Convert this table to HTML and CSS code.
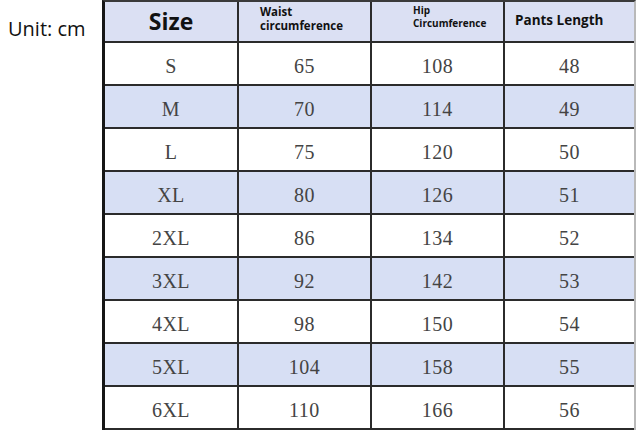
FILE: index.html
```html
<!DOCTYPE html>
<html>
<head>
<meta charset="utf-8">
<link rel="stylesheet" href="styles.css">
</head>
<body>
<div class="page">
  <div class="unit">Unit: cm</div>
  <div class="chart">
    <div class="cell head size-head">Size</div>
    <div class="cell head waist-head">Waist<br>circumference</div>
    <div class="cell head hip-head">Hip<br>Circumference</div>
    <div class="cell head pants-head">Pants Length</div>

    <div class="cell">S</div><div class="cell">65</div><div class="cell">108</div><div class="cell">48</div>
    <div class="cell alt">M</div><div class="cell alt">70</div><div class="cell alt">114</div><div class="cell alt">49</div>
    <div class="cell">L</div><div class="cell">75</div><div class="cell">120</div><div class="cell">50</div>
    <div class="cell alt">XL</div><div class="cell alt">80</div><div class="cell alt">126</div><div class="cell alt">51</div>
    <div class="cell">2XL</div><div class="cell">86</div><div class="cell">134</div><div class="cell">52</div>
    <div class="cell alt">3XL</div><div class="cell alt">92</div><div class="cell alt">142</div><div class="cell alt">53</div>
    <div class="cell">4XL</div><div class="cell">98</div><div class="cell">150</div><div class="cell">54</div>
    <div class="cell alt">5XL</div><div class="cell alt">104</div><div class="cell alt">158</div><div class="cell alt">55</div>
    <div class="cell">6XL</div><div class="cell">110</div><div class="cell">166</div><div class="cell">56</div>
  </div>
</div>
</body>
</html>
```

FILE: styles.css
```css
html, body {
  margin: 0;
  padding: 0;
  background: #ffffff;
}

.page {
  display: flex;
  align-items: flex-start;
  width: 636px;
  height: 430px;
  overflow: hidden;
}

.unit {
  width: 94px;
  padding-left: 8px;
  padding-top: 15px;
  font-family: "Open Sans", "Liberation Sans", sans-serif;
  font-size: 20px;
  color: #111;
  white-space: nowrap;
}

.chart {
  display: grid;
  grid-template-columns: 132px 131px 131px 129px;
  grid-template-rows: 39px repeat(9, 41px);
  gap: 2px;
  background: #2b2b2b;
  border-left: 3px solid #161616;
  border-top: 2px solid #3a3a3a;
  border-right: 2px solid #b9b9b9;
  padding-bottom: 2px;
}

.cell {
  background: #ffffff;
  display: flex;
  align-items: center;
  justify-content: center;
  padding-top: 5px;
  box-sizing: border-box;
  font-family: "Liberation Serif", "Times New Roman", serif;
  font-size: 20px;
  letter-spacing: 0.5px;
  color: #444;
}

.cell.alt {
  background: #d7dff4;
}

.cell.head {
  background: #dbe0f3;
  font-family: "Open Sans", "Liberation Sans", sans-serif;
  font-weight: 700;
  color: #111;
  padding-top: 0;
  letter-spacing: 0;
}

.size-head {
  font-size: 23px;
  padding-bottom: 2px;
}

.waist-head {
  justify-content: flex-start;
  padding-left: 21px;
  font-size: 11.5px;
  line-height: 14px;
  letter-spacing: 0.8px;
  padding-bottom: 6px;
}

.hip-head {
  justify-content: flex-start;
  padding-left: 41px;
  font-size: 10px;
  line-height: 13px;
  letter-spacing: 0.7px;
  padding-bottom: 9px;
}

.pants-head {
  justify-content: flex-start;
  padding-left: 10px;
  font-size: 13.5px;
  padding-bottom: 3px;
}
```
